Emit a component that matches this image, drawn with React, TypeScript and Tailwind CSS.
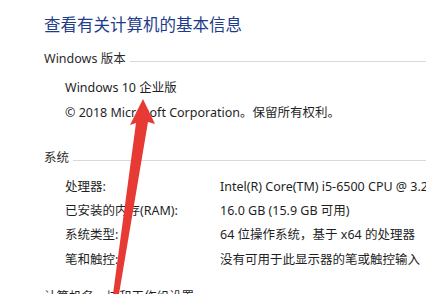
const rows = [
  { label: '处理器:', value: 'Intel(R) Core(TM) i5-6500 CPU @ 3.20GHz   3.19 GHz', mt: 'mt-[5px]' },
  { label: '已安装的内存(RAM):', value: '16.0 GB (15.9 GB 可用)', mt: 'mt-0' },
  { label: '系统类型:', value: '64 位操作系统，基于 x64 的处理器', mt: 'mt-0' },
  { label: '笔和触控:', value: '没有可用于此显示器的笔或触控输入', mt: 'mt-[1px]' },
];

export default function App() {
  return (
    <div
      className="relative w-[426px] h-[294px] overflow-hidden bg-white text-[12.5px] text-[#1f1f1f]"
      style={{ fontFamily: '"Noto Sans", "Noto Sans CJK SC", sans-serif' }}
    >
      <div className="flex flex-col pl-[44px] pt-[13px]">
        <h1 className="h-[24px] flex items-center text-[16.5px] text-[#1e3c8a] whitespace-nowrap">查看有关计算机的基本信息</h1>

        {/* Windows 版本 */}
        <div className="mt-[10px] h-[24px] flex items-center gap-[4px]">
          <span className="text-[#2b2b2b] whitespace-nowrap">Windows 版本</span>
          <div className="flex-1 h-px bg-[#d9d9d9] mt-[5px]" />
        </div>
        <div className="pl-[21px] mt-[5px] h-[24px] flex items-center whitespace-nowrap">Windows 10 企业版</div>
        <div className="pl-[21px] mt-[1px] h-[24px] flex items-center whitespace-nowrap">© 2018 Microsoft Corporation。保留所有权利。</div>

        {/* 系统 */}
        <div className="mt-[21px] h-[24px] flex items-center gap-[4px]">
          <span className="text-[#2b2b2b] whitespace-nowrap">系统</span>
          <div className="flex-1 h-px bg-[#d9d9d9] mt-[5px]" />
        </div>
        {rows.map((r) => (
          <div key={r.label} className={`${r.mt} pl-[21px] h-[24px] flex items-center whitespace-nowrap`}>
            <span className="w-[155px] shrink-0">{r.label}</span>
            <span>{r.value}</span>
          </div>
        ))}
        <div className="mt-[13px] h-[24px] flex items-center whitespace-nowrap">计算机名、域和工作组设置</div>
      </div>

      {/* red annotation arrow */}
      <svg className="absolute inset-0 pointer-events-none" width="426" height="294" viewBox="0 0 426 294">
        <polygon
          points="143,99 155,124 148,122 119,294 113,294 136,123 130,125"
          fill="#e83a35"
        />
      </svg>
    </div>
  );
}
